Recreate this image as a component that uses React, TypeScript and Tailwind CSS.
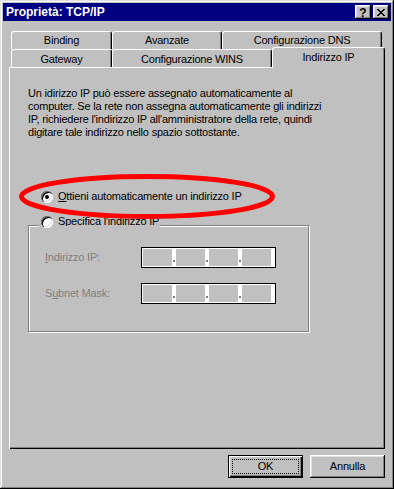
import React from "react";

const bevel =
  "shadow-[inset_-1px_-1px_#000,inset_1px_1px_#fff,inset_-2px_-2px_#808080,inset_2px_2px_#dfdfdf]";

const tabBase =
  "relative flex items-center justify-center h-[18px] bg-[#c0c0c0] border-l border-t border-r border-l-white border-t-white border-r-black rounded-t-[3px] shadow-[inset_-1px_0_#808080]";

function Radio({ checked }: { checked?: boolean }) {
  return (
    <div className="relative w-[12px] h-[12px] shrink-0 rounded-full bg-white shadow-[inset_1px_1px_#808080,inset_2px_2px_#000,inset_-1px_-1px_#fff,inset_-2px_-2px_#dfdfdf]">
      {checked && (
        <div className="absolute left-[4px] top-[4px] w-[4px] h-[4px] rounded-full bg-black" />
      )}
    </div>
  );
}

// disabled IP address field: four grey slots with dots between
function IpField() {
  return (
    <div className="flex w-[135px] h-[21px] border border-black bg-white pl-[1px] py-[1px]">
      {[0, 1, 2, 3].map((i) => (
        <React.Fragment key={i}>
          <div className="w-[29px] h-[17px] bg-[#c0c0c0]" />
          {i < 3 && (
            <div className="w-[4px] h-[17px] pl-[1px] pt-[11px]">
              <div className="w-[2px] h-[2px] bg-[#808080]" />
            </div>
          )}
        </React.Fragment>
      ))}
    </div>
  );
}

export default function App() {
  return (
    <div className="w-[394px] h-[489px] bg-[#c0c0c0] p-[3px] flex flex-col text-[11px] leading-[13px] text-black font-['Liberation_Sans',Arial,sans-serif] shadow-[inset_-1px_-1px_#000,inset_1px_1px_#dfdfdf,inset_-2px_-2px_#808080,inset_2px_2px_#fff]">
      {/* Title bar */}
      <div className="h-[18px] bg-[#000080] flex items-center pl-[3px] pr-[2px]">
        <span className="flex-1 text-white font-bold text-[12px]">Proprietà: TCP/IP</span>
        <div className={`w-[16px] h-[14px] bg-[#c0c0c0] flex items-center justify-center font-bold text-[12px] leading-none pt-[1px] ${bevel}`}>
          ?
        </div>
        <div className={`ml-[2px] w-[16px] h-[14px] bg-[#c0c0c0] flex items-center justify-center ${bevel}`}>
          <svg width="8" height="7" viewBox="0 0 8 7" shapeRendering="crispEdges">
            <path
              d="M0 0h2v1H0zM6 0h2v1H6zM1 1h2v1H1zM5 1h2v1H5zM2 2h4v1H2zM3 3h2v1H3zM2 4h4v1H2zM1 5h2v1H1zM5 5h2v1H5zM0 6h2v1H0zM6 6h2v1H6z"
              fill="#000"
            />
          </svg>
        </div>
      </div>

      <div className="flex-1 flex flex-col px-[6px] pt-[10px] tracking-[-0.2px]">
        {/* Tabs */}
        <div className="flex pl-[2px]">
          <div className={`${tabBase} w-[101px]`}>Binding</div>
          <div className={`${tabBase} w-[110px]`}>Avanzate</div>
          <div className={`${tabBase} w-[160px]`}>Configurazione DNS</div>
        </div>
        <div className="flex items-start pl-[2px] h-[18px]">
          <div className={`${tabBase} w-[101px] pt-[2px]`}>Gateway</div>
          <div className={`${tabBase} w-[160px] pt-[2px]`}>Configurazione WINS</div>
          <div className="relative z-10 -mt-[2px] w-[113px] h-[21px] pb-[1px] flex items-center justify-center bg-[#c0c0c0] border-l border-t border-r border-l-white border-t-white border-r-black rounded-t-[3px] shadow-[inset_-1px_0_#808080]">
            Indirizzo IP
          </div>
        </div>

        {/* Page */}
        <div className="relative h-[382px] pl-[19px] pt-[20px] shadow-[inset_1px_1px_#fff,inset_-1px_-1px_#000,inset_-2px_-2px_#808080]">
          <p>
            Un idirizzo IP può essere assegnato automaticamente al
            <br />
            computer. Se la rete non assegna automaticamente gli indirizzi
            <br />
            IP, richiedere l'indirizzo IP all'amministratore della rete, quindi
            <br />
            digitare tale indirizzo nello spazio sottostante.
          </p>

          <div className="mt-[51px] h-[13px] pl-[13px] flex items-center gap-[5px]">
            <Radio checked />
            <span>
              <span className="underline">O</span>ttieni automaticamente un indirizzo IP
            </span>
          </div>

          <div className="relative mt-[22px] w-[281px] h-[107px] border border-[#808080] shadow-[inset_1px_1px_#fff,1px_1px_#fff] pl-[16px] pt-[21px]">
            <div className="absolute left-[10px] top-[-11px] h-[12px] pl-[2px] pr-[1px] flex items-start gap-[5px] bg-[#c0c0c0]">
              <div className="mt-[1px]">
                <Radio />
              </div>
              <span className="h-[11px] overflow-hidden">
                <span className="underline">S</span>pecifica l'indirizzo IP
              </span>
            </div>

            <div className="flex items-center">
              <span className="w-[96px] text-[#808080]">
                <span className="underline">I</span>ndirizzo IP:
              </span>
              <IpField />
            </div>
            <div className="flex items-center mt-[15px]">
              <span className="w-[96px] text-[#808080]">
                S<span className="underline">u</span>bnet Mask:
              </span>
              <IpField />
            </div>
          </div>

          {/* red annotation */}
          <svg
            className="absolute left-[10px] top-[104px] pointer-events-none"
            width="258"
            height="51"
            viewBox="0 0 258 51"
          >
            <ellipse cx="128" cy="25.5" rx="125.5" ry="20" fill="none" stroke="#ff0000" strokeWidth="5" />
          </svg>
        </div>

        {/* Buttons */}
        <div className="flex justify-end gap-[7px] mt-[6px]">
          <button className="relative w-[75px] h-[23px] bg-[#c0c0c0] shadow-[inset_0_0_0_1px_#000,inset_2px_2px_#fff,inset_-2px_-2px_#000,inset_-3px_-3px_#808080]">
            OK
            <span className="absolute inset-[4px] border border-dotted border-black" />
          </button>
          <button className={`w-[75px] h-[23px] bg-[#c0c0c0] ${bevel}`}>Annulla</button>
        </div>
      </div>
    </div>
  );
}
